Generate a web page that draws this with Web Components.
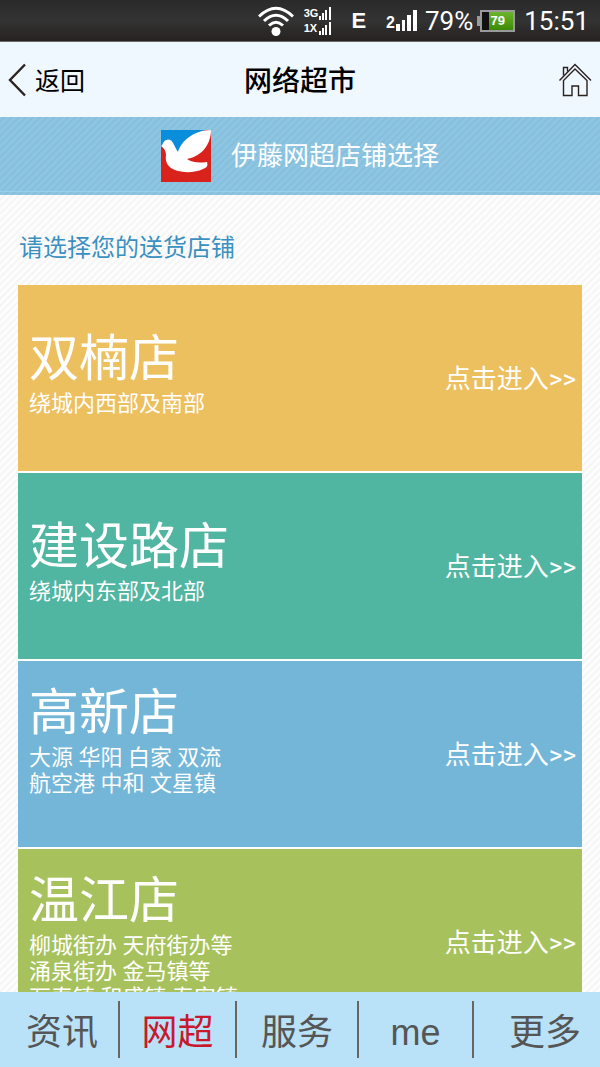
<!DOCTYPE html>
<html lang="zh-CN">
<head>
<meta charset="UTF-8">
<meta name="viewport" content="width=device-width, initial-scale=1.0">
<title>网络超市</title>
<style>
  body {
    margin: 0;
    font-family: Roboto, "Noto Sans CJK SC", sans-serif;
    color: #000;
  }
</style>
</head>
<body>
<market-app>
  <status-bar slot="top"></status-bar>
  <page-header slot="top">网络超市</page-header>
  <shop-banner>伊藤网超店铺选择</shop-banner>
  <store-list>
    <span slot="prompt">请选择您的送货店铺</span>
    <store-card color="#edc05f" short>
      <span slot="name">双楠店</span>
      绕城内西部及南部
    </store-card>
    <store-card color="#50b5a1" short>
      <span slot="name">建设路店</span>
      绕城内东部及北部
    </store-card>
    <store-card color="#74b6d7">
      <span slot="name">高新店</span>
      大源 华阳 白家 双流<br>航空港 中和 文星镇
    </store-card>
    <store-card color="#a7c25c">
      <span slot="name">温江店</span>
      柳城街办 天府街办等<br>涌泉街办 金马镇等<br>万春镇 和盛镇 寿安镇
    </store-card>
  </store-list>
  <tab-bar slot="bottom"></tab-bar>
</market-app>

<script>
class MarketApp extends HTMLElement {
  connectedCallback() {
    this.attachShadow({ mode: 'open' });
    this.shadowRoot.innerHTML = `
      <style>
        :host {
          display: flex;
          flex-direction: column;
          height: 100vh;
        }
        main {
          flex: 1;
          min-height: 0;
          overflow-y: auto;
          scrollbar-width: none;
          background: repeating-linear-gradient(135deg, #fdfdfd 0 2px, #f5f5f5 3px 4px, #fdfdfd 5px);
        }
      </style>
      <slot name="top"></slot>
      <main><slot></slot></main>
      <slot name="bottom"></slot>
    `;
  }
}

class StatusBar extends HTMLElement {
  connectedCallback() {
    this.attachShadow({ mode: 'open' });
    this.shadowRoot.innerHTML = `
      <style>
        :host {
          display: flex;
          flex-shrink: 0;
          align-items: center;
          justify-content: flex-end;
          box-sizing: border-box;
          height: 42px;
          padding-right: 11px;
          background: linear-gradient(#2a2a2a, #333 50%, #262220);
          border-bottom: 1px solid #6b6869;
          color: #fff;
          font-size: 26px;
          line-height: 30px;
        }
        svg {
          display: block;
        }
        .wifi {
          margin-right: 10px;
        }
        .dual {
          display: grid;
          grid-template-columns: auto auto;
          align-items: center;
          gap: 2px 1px;
          margin-right: 20px;
          font: bold 11px/13px "Liberation Sans", sans-serif;
        }
        .edge {
          margin-right: 20px;
          font: bold 22px/26px "Liberation Sans", sans-serif;
        }
        .signal {
          display: flex;
          align-items: flex-end;
          gap: 1px;
          margin-right: 8px;
          font: bold 16px/16px "Liberation Sans", sans-serif;
        }
        .battery {
          display: flex;
          align-items: center;
          margin: 0 9px 0 4px;
        }
        .tip {
          width: 3px;
          height: 10px;
          background: #9a9a9a;
        }
        .cell {
          box-sizing: border-box;
          width: 35px;
          height: 22px;
          border: 2px solid #9a9a9a;
          background: linear-gradient(90deg, #111 0 7px, transparent 7px), linear-gradient(#6cb52c, #3c8a08);
          font: bold 13px/18px "Liberation Sans", sans-serif;
          text-align: center;
        }
      </style>
      <svg class="wifi" width="36" height="30" viewBox="0 0 36 30" fill="none" stroke="#fff" stroke-width="3">
        <path d="M1 10.500Q18 -6 35 10.500"/>
        <path d="M6 15Q18 3.500 30 15"/>
        <path d="M11 19.500Q18 13 25 19.500"/>
        <circle cx="18" cy="25.500" r="4.500" fill="#fff" stroke="none"/>
      </svg>
      <div class="dual">
        <span>3G</span>
        <svg width="12" height="13" fill="#fff"><path d="M0 9h2v4H0zM3 6h2v7H3zM6 3h2v10H6zM10 0h2v13h-2z"/></svg>
        <span>1X</span>
        <svg width="12" height="13" fill="#fff"><path d="M0 9h2v4H0zM3 6h2v7H3zM6 3h2v10H6zM10 0h2v13h-2z"/></svg>
      </div>
      <span class="edge">E</span>
      <div class="signal">
        <span>2</span>
        <svg width="21" height="21" fill="#fff"><path d="M0 14h4v7H0zM6 10h3v11H6zM11 5h4v16h-4zM17 0h4v21h-4z"/></svg>
      </div>
      <span>79%</span>
      <div class="battery"><span class="tip"></span><span class="cell">79</span></div>
      <time>15:51</time>
    `;
  }
}

class PageHeader extends HTMLElement {
  connectedCallback() {
    this.attachShadow({ mode: 'open' });
    this.shadowRoot.innerHTML = `
      <style>
        :host {
          display: grid;
          grid-template-columns: 1fr auto 1fr;
          flex-shrink: 0;
          align-items: center;
          height: 75px;
          padding: 0 8px;
          background: #eff7ff;
        }
        h1 {
          margin: 0;
          padding-top: 4px;
          font-size: 28px;
          font-weight: 500;
          line-height: 40px;
        }
        button {
          display: flex;
          align-items: center;
          gap: 9px;
          justify-self: start;
          padding: 0;
          border: 0;
          background: none;
          color: inherit;
          font: inherit;
          font-size: 25px;
          line-height: 40px;
        }
        button span {
          padding-top: 4px;
        }
        a {
          justify-self: end;
        }
        svg {
          display: block;
          fill: none;
          stroke: #2b211f;
        }
      </style>
      <button type="button">
        <svg width="18" height="34" viewBox="0 0 18 34" stroke-width="2.400"><path d="M17 1.500 2 17 17 32.500"/></svg>
        <span>返回</span>
      </button>
      <h1><slot></slot></h1>
      <a href="#" aria-label="首页">
        <svg width="34" height="34" viewBox="0 0 34 34" stroke-width="1.400">
          <path d="M1.500 17.500 17 1.500l16 16"/>
          <path d="M5.500 17.500v15h8.500V23h6.500v9.500H29v-15L17 6z"/>
          <path d="M5.500 12.500V4.500h4v4"/>
        </svg>
      </a>
    `;
  }
}

class ShopBanner extends HTMLElement {
  connectedCallback() {
    this.attachShadow({ mode: 'open' });
    this.shadowRoot.innerHTML = `
      <style>
        :host {
          display: flex;
          align-items: center;
          justify-content: center;
          gap: 20px;
          box-sizing: border-box;
          height: 78px;
          background:
            linear-gradient(transparent 74px, #97d0ec 74px 75px, transparent 75px),
            repeating-linear-gradient(135deg, #8dc5e3 0 2px, #86bfdc 3px 4px, #8dc5e3 5px);
          color: #fff;
        }
        h2 {
          margin: 0;
          font-size: 26px;
          font-weight: 400;
          line-height: 40px;
        }
      </style>
      <svg width="50" height="52" viewBox="0 0 50 52" aria-hidden="true">
        <path fill="#d9221c" d="M0 0h50v52H0z"/>
        <path fill="#0a8edb" d="M0 0h44L16 24 0 16z"/>
        <path fill="#fff" d="M0 16c2-1 2-6 7-6.500C12 9.500 13 16 17 22 20 11 33 0 50 0c0 13-8 26-24 29 6 4 13 4 20 3 1.500 4-1 6-4 7-8 4-20 4-28 1C6 37 4 31 5 25c0-4-2-7-5-9z"/>
      </svg>
      <h2><slot></slot></h2>
    `;
  }
}

class StoreList extends HTMLElement {
  connectedCallback() {
    this.attachShadow({ mode: 'open' });
    this.shadowRoot.innerHTML = `
      <style>
        :host {
          display: block;
          padding: 35px 18px 20px;
        }
        p {
          margin: 0 1px 19px;
          color: #3a90c1;
          font-size: 24px;
          line-height: 36px;
        }
        .cards {
          display: flex;
          flex-direction: column;
          gap: 2px;
          background: #fff;
        }
      </style>
      <p><slot name="prompt"></slot></p>
      <div class="cards"><slot></slot></div>
    `;
  }
}

class StoreCard extends HTMLElement {
  connectedCallback() {
    this.attachShadow({ mode: 'open' });
    this.shadowRoot.innerHTML = `
      <style>
        :host {
          display: flex;
          align-items: center;
          justify-content: space-between;
          box-sizing: border-box;
          min-height: 186px;
          padding: 0 6px 0 11px;
          background: ${this.getAttribute('color')};
          color: #fff;
        }
        .info {
          align-self: flex-start;
          padding-top: 21px;
        }
        :host([short]) .info {
          padding-top: 43px;
        }
        h3 {
          margin: 0;
          font-size: 50px;
          font-weight: 400;
          line-height: 63px;
        }
        p {
          margin: 0;
          font-size: 22px;
          line-height: 26px;
        }
        a {
          padding-top: 2px;
          color: inherit;
          font-size: 26px;
          line-height: 40px;
          text-decoration: none;
          white-space: nowrap;
        }
      </style>
      <div class="info">
        <h3><slot name="name"></slot></h3>
        <p><slot></slot></p>
      </div>
      <a href="#">点击进入&gt;&gt;</a>
    `;
  }
}

class TabBar extends HTMLElement {
  connectedCallback() {
    this.attachShadow({ mode: 'open' });
    this.shadowRoot.innerHTML = `
      <style>
        :host {
          display: block;
          flex-shrink: 0;
          background: #b9e2f9;
        }
        nav {
          display: grid;
          grid-template-columns: 120fr 117fr 122fr 115fr 126fr;
          padding: 9px 0;
        }
        a {
          padding-top: 6px;
          border-right: 2px solid #666;
          color: #555;
          font: 36px/51px "Liberation Sans", "Noto Sans CJK SC", sans-serif;
          text-align: center;
          text-decoration: none;
        }
        a:first-child {
          padding-left: 6px;
        }
        a:last-child {
          border-right: 0;
          padding-right: 19px;
          text-align: right;
        }
        a[aria-current] {
          color: #c9182b;
        }
      </style>
      <nav>
        <a href="#">资讯</a>
        <a href="#" aria-current="page">网超</a>
        <a href="#">服务</a>
        <a href="#">me</a>
        <a href="#">更多</a>
      </nav>
    `;
  }
}

customElements.define('market-app', MarketApp);
customElements.define('status-bar', StatusBar);
customElements.define('page-header', PageHeader);
customElements.define('shop-banner', ShopBanner);
customElements.define('store-list', StoreList);
customElements.define('store-card', StoreCard);
customElements.define('tab-bar', TabBar);
</script>
</body>
</html>
